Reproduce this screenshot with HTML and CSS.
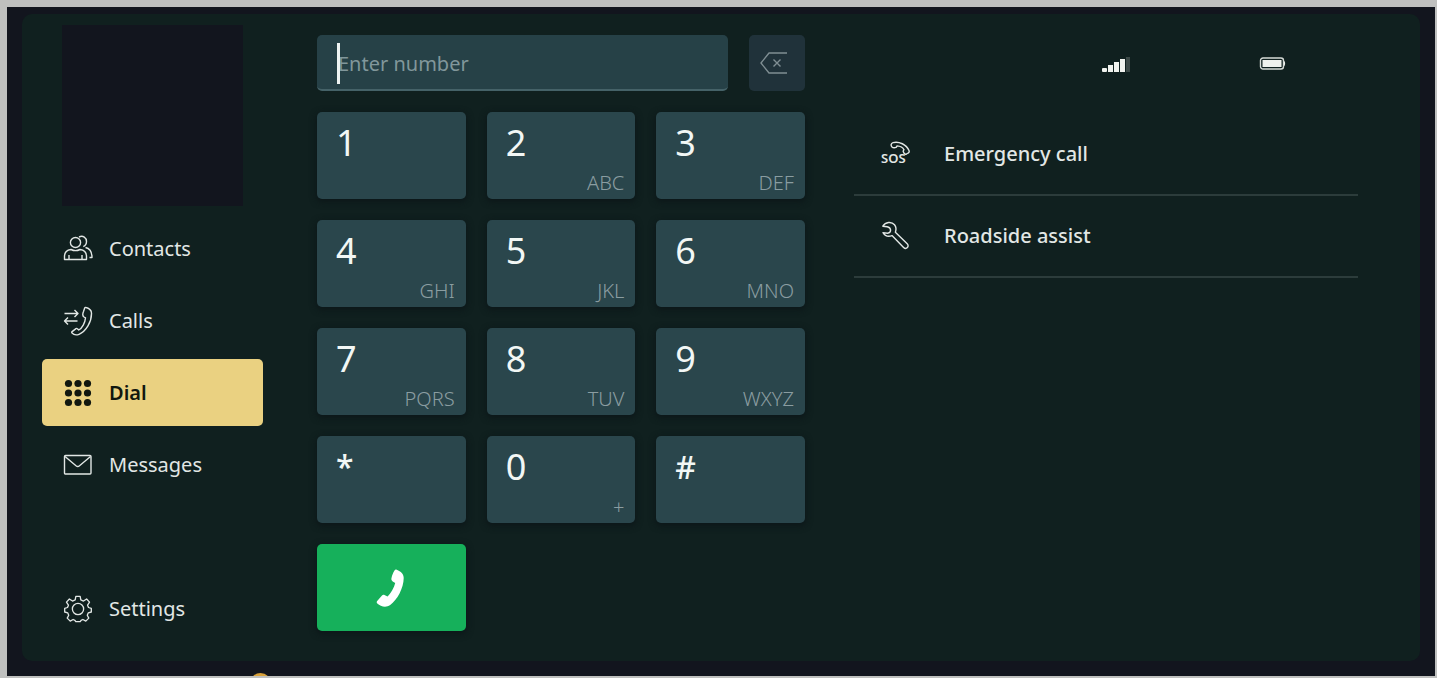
FILE: index.html
```html
<!DOCTYPE html>
<html lang="en">
<head>
    <meta charset="UTF-8">
    <meta name="viewport" content="width=device-width, initial-scale=1.0">
    <title>Phone</title>
    <link rel="stylesheet" href="styles.css">
</head>
<body>
    <div class="screen">
        <div class="panel">

            <div class="sidebar">
                <div class="picture"></div>
                <nav class="menu">
                    <a class="menu-item" href="#contacts">
                        <svg class="icon" viewBox="0 0 30 30">
                            <ellipse cx="12.5" cy="8.5" rx="5.1" ry="5"/>
                            <path d="M1.5 25.5v-3c0-4 1.500-6.500 6.500-7 3 1.500 6 1.500 9 0 5 .5 6.500 3 6.500 7v3z"/>
                            <path d="M6 25v-4M19 25v-4"/>
                            <path d="M16 3c4-2 7.500.800 7.500 4.500 0 2.500-1.300 4.300-3.200 5.200M22.500 13.500c4.500 1 6.500 3.500 6.500 10h-2.500"/>
                        </svg>
                        <span>Contacts</span>
                    </a>
                    <a class="menu-item" href="#calls">
                        <svg class="icon" viewBox="0 0 30 30">
                            <path d="M1.5 7.500h13M11.500 4l3.500 3.500-3.500 3.500M14.500 15h-13M5 11.500L1.500 15 5 18.500"/>
                            <path d="M20.500 5.500l1.200-3.400c.2-.6.800-.8 1.400-.6 3.400 1 5.300 2.700 5.400 5.500.2 9-5.500 18.500-12.500 21.300-3 1.200-5.500.3-7-1.300-.5-.5-.4-1 .1-1.400l3.900-3c.5-.3 1-.3 1.400.1l1.400 1.300c3.200-1.700 6.400-7.400 6.700-12.200l-1.500-.8c-1.500-.9-1.300-3.500-.5-5.500z"/>
                        </svg>
                        <span>Calls</span>
                    </a>
                    <a class="menu-item active" href="#dial">
                        <svg class="icon dots" viewBox="0 0 30 30">
                            <circle cx="5.500" cy="5.500" r="3.600"/><circle cx="15" cy="5.500" r="3.600"/><circle cx="24.500" cy="5.500" r="3.600"/>
                            <circle cx="5.500" cy="15" r="3.600"/><circle cx="15" cy="15" r="3.600"/><circle cx="24.500" cy="15" r="3.600"/>
                            <circle cx="5.500" cy="24.500" r="3.600"/><circle cx="15" cy="24.500" r="3.600"/><circle cx="24.500" cy="24.500" r="3.600"/>
                        </svg>
                        <span>Dial</span>
                    </a>
                    <a class="menu-item" href="#messages">
                        <svg class="icon" viewBox="0 0 30 30">
                            <rect x="1.500" y="5.500" width="26.500" height="18.500" rx="1"/>
                            <path d="M2 6.500l11 9.300c1.200.9 2.400.9 3.500 0l11-9.300"/>
                        </svg>
                        <span>Messages</span>
                    </a>
                    <a class="menu-item settings" href="#settings">
                        <svg class="icon" viewBox="-1 -1 32 32">
                            <circle cx="15" cy="15" r="6"/>
                            <path d="M12.700 1.500h4.600l.7 3.800 2.900 1.200 3.300-2.200 3.100 3.400-2.100 3.200 1 2.500 3 1v3.800l-3.200.9-1.100 2.500 1.600 3.100-3.200 3.200-3.100-1.700-1.900.9-.9 1.300h-4.800l-.9-1.300-1.900-.9-3.100 1.700-3.200-3.200 1.600-3.100L4 19.100l-3.200-.9v-3.800l3-1 1-2.500-2.100-3.200 3.100-3.400 3.300 2.200L12 5.300z"/>
                        </svg>
                        <span>Settings</span>
                    </a>
                </nav>
            </div>

            <div class="dialer">
                <div class="number">
                    <div class="number-field">
                        <input class="number-box" type="text" id="number-input" aria-label="Phone number" placeholder="Enter number">
                        <span class="caret"></span>
                    </div>
                    <button class="erase" aria-label="Delete">
                        <svg class="icon" viewBox="0 0 30 30">
                            <path d="M27 5H9L1 15l8 10h18M13.500 11.500l7 7M20.500 11.500l-7 7"/>
                        </svg>
                    </button>
                </div>
                <div class="keypad">
                    <button class="key"><span class="digit">1</span></button>
                    <button class="key"><span class="digit">2</span><span class="letters">ABC</span></button>
                    <button class="key"><span class="digit">3</span><span class="letters">DEF</span></button>
                    <button class="key"><span class="digit">4</span><span class="letters">GHI</span></button>
                    <button class="key"><span class="digit">5</span><span class="letters">JKL</span></button>
                    <button class="key"><span class="digit">6</span><span class="letters">MNO</span></button>
                    <button class="key"><span class="digit">7</span><span class="letters">PQRS</span></button>
                    <button class="key"><span class="digit">8</span><span class="letters">TUV</span></button>
                    <button class="key"><span class="digit">9</span><span class="letters">WXYZ</span></button>
                    <button class="key"><span class="digit symbol">*</span></button>
                    <button class="key"><span class="digit">0</span><span class="letters">+</span></button>
                    <button class="key"><span class="digit symbol">#</span></button>
                    <button class="key call" aria-label="Call">
                        <svg class="call-icon" viewBox="0 0 30 38">
                            <path d="M18.500 1.500c.5-.9 1.300-1.200 2.200-.8 4.300 1.700 7 4 7 8.300 0 10-6.500 22-13.500 27-4.500 3-9.500 1.500-12.900-1.600-.9-.9-.8-1.700.1-2.600l4.600-5.400c.7-.8 1.600-1 2.500-.5l3 1.600c3.300-3 6.800-9.500 7.700-13.500l-2.500-1.600c-1.300-.8-1.500-1.900-1.200-3.400.5-2.700 1.500-5 3-7.500z"/>
                        </svg>
                    </button>
                </div>
            </div>

            <div class="side">
                <div class="status">
                    <svg class="signal" viewBox="0 0 28 16">
                        <rect x="0" y="11" width="5" height="4" rx="1"/>
                        <rect x="6" y="8" width="5" height="7"/>
                        <rect x="12" y="5" width="5" height="10"/>
                        <rect x="18" y="2" width="5" height="13"/>
                        <rect class="off" x="24" y="0" width="4" height="15"/>
                    </svg>
                    <svg class="battery" viewBox="0 0 26 14">
                        <rect class="shell" x="1" y="1" width="23" height="11" rx="2.500"/>
                        <rect x="3" y="3" width="19" height="7"/>
                        <path d="M24.500 4c1.500.5 1.500 4.500 0 5z"/>
                    </svg>
                </div>
                <div class="services">
                    <a class="service" href="#emergency">
                        <svg class="icon" viewBox="0 0 30 30">
                            <text class="sos" x="1" y="24">SOS</text>
                            <path d="M12 8c-1.500-1.500-1-3.800 1-4.400 6-1.600 13.500 2 16 8 .4 1 0 2-.8 2.400l-1.700 1c-1 .5-2 .1-2.500-.8l-.8-1.800c0-.6.200-1.100.8-1.600-1-2-4-3.700-7-3.900-.2 1-.8 1.700-1.700 1.700-1.400.2-2.600 0-3.300-.6z"/>
                        </svg>
                        <span>Emergency call</span>
                    </a>
                    <a class="service" href="#roadside">
                        <svg class="icon" viewBox="-1 0 30 30">
                            <path d="M1.800 5.200C4.500.8 10.500.2 13.500 3.800c1.900 2.400 1.900 4.600.9 7.400l11.800 11.600c2.600 2.600-1 6.200-3.600 3.600L11 14.600c-3.300 1.300-7 .4-9-3l4.600.6c1.600-.2 3-1.400 3-3.200C9.400 7 8 6 6.200 5.700z"/>
                        </svg>
                        <span>Roadside assist</span>
                    </a>
                </div>
            </div>

        </div>
        <div class="marker"></div>
    </div>
</body>
</html>
```
FILE: styles.css
```css
* {
    box-sizing: border-box;
}
body {
    margin: 0;
    padding: 7px 2px 2px 7px;
    min-height: 100vh;
    display: flex;
    background-color: #bfc0bf;
    font-family: "Noto Sans", sans-serif;
    font-size: 20px;
    line-height: 28px;
    color: #e2e7e5;
}
a {
    color: inherit;
    text-decoration: none;
}
button, input {
    font: inherit;
    color: inherit;
    border: none;
}
.screen {
    position: relative;
    overflow: hidden;
    flex: 1;
    display: flex;
    padding: 7px 15px 15px;
    background-color: #12151e;
}
.panel {
    flex: 1;
    display: grid;
    grid-template-columns: 221px 488px 1fr;
    padding: 11px 62px 19px 20px;
    border-radius: 10px;
    background-color: #10201f;
}

/* icons */
.icon {
    width: 30px;
    height: 30px;
    flex-shrink: 0;
    fill: none;
    stroke: currentColor;
    stroke-width: 1.4;
    stroke-linejoin: round;
}
.dots {
    fill: currentColor;
    stroke: none;
}

/* left menu */
.sidebar {
    display: flex;
    flex-direction: column;
}
.picture {
    width: 181px;
    height: 181px;
    margin: 0 20px 9px;
    background-color: #12151e;
}
.menu {
    flex: 1;
    display: flex;
    flex-direction: column;
    gap: 5px;
}
.menu-item {
    height: 67px;
    display: flex;
    align-items: center;
    gap: 16px;
    padding: 0 21px;
    border-radius: 5px;
}
.active {
    background-color: #ead181;
    color: #11170f;
    font-weight: 600;
}
.settings {
    margin-top: auto;
}

/* dial pad */
.dialer {
    margin: 10px -54px 0 54px;
    display: flex;
    flex-direction: column;
    gap: 21px;
}
.number {
    display: flex;
    gap: 21px;
}
.number-field {
    position: relative;
    flex: 1;
}
.number-box {
    width: 100%;
    height: 56px;
    padding: 2px 21px 0;
    border-radius: 5px;
    border-bottom: 2px solid #456268;
    background-color: #264147;
    outline: none;
}
.number-box::placeholder {
    color: #81979b;
    opacity: 1;
}
.caret {
    position: absolute;
    left: 20px;
    top: 8px;
    width: 3px;
    height: 41px;
    background-color: #eef3f2;
}
.erase {
    display: flex;
    align-items: center;
    justify-content: center;
    width: 56px;
    height: 56px;
    padding: 0 4px 0 0;
    border-radius: 5px;
    background-color: #20323a;
    color: #7f8e93;
}
.keypad {
    display: grid;
    grid-template-columns: repeat(3, 1fr);
    grid-auto-rows: 87px;
    gap: 21px;
}
.key {
    display: flex;
    flex-direction: column;
    align-items: flex-start;
    justify-content: space-between;
    padding: 9px 11px 2px 19px;
    border-radius: 5px;
    background-color: #2a464c;
    box-shadow: 0 2px 6px 1px #0c1719;
}
.digit {
    font-size: 36px;
    line-height: 44px;
    color: #f2f7f5;
}
.symbol {
    font-size: 32px;
    font-weight: 500;
}
.letters {
    align-self: flex-end;
    font-weight: 300;
    color: #8a9da1;
}
.call {
    align-items: center;
    justify-content: center;
    padding: 0;
    background-color: #16b05b;
}
.call-icon {
    width: 30px;
    height: 38px;
    fill: #ffffff;
}

/* status and services */
.side {
    margin-left: 103px;
}
.status {
    height: 89px;
    padding: 32px 72px 0 248px;
    display: flex;
    justify-content: space-between;
    fill: #f0f2ee;
}
.signal {
    width: 28px;
    height: 16px;
}
.off {
    fill: #3c4947;
}
.battery {
    width: 27px;
    height: 14px;
}
.shell {
    fill: none;
    stroke: #d5dad6;
    stroke-width: 1.4;
}
.service {
    height: 82px;
    display: flex;
    align-items: center;
    gap: 34px;
    padding: 0 26px;
    border-bottom: 2px solid #2c3c3b;
    font-weight: 500;
}
.sos {
    font-size: 13px;
    font-weight: 600;
    fill: currentColor;
    stroke: none;
}

/* orange marker under the panel */
.marker {
    position: absolute;
    left: 243px;
    bottom: -18px;
    width: 21px;
    height: 21px;
    border-radius: 50%;
    background-color: #d9a13a;
}
```
